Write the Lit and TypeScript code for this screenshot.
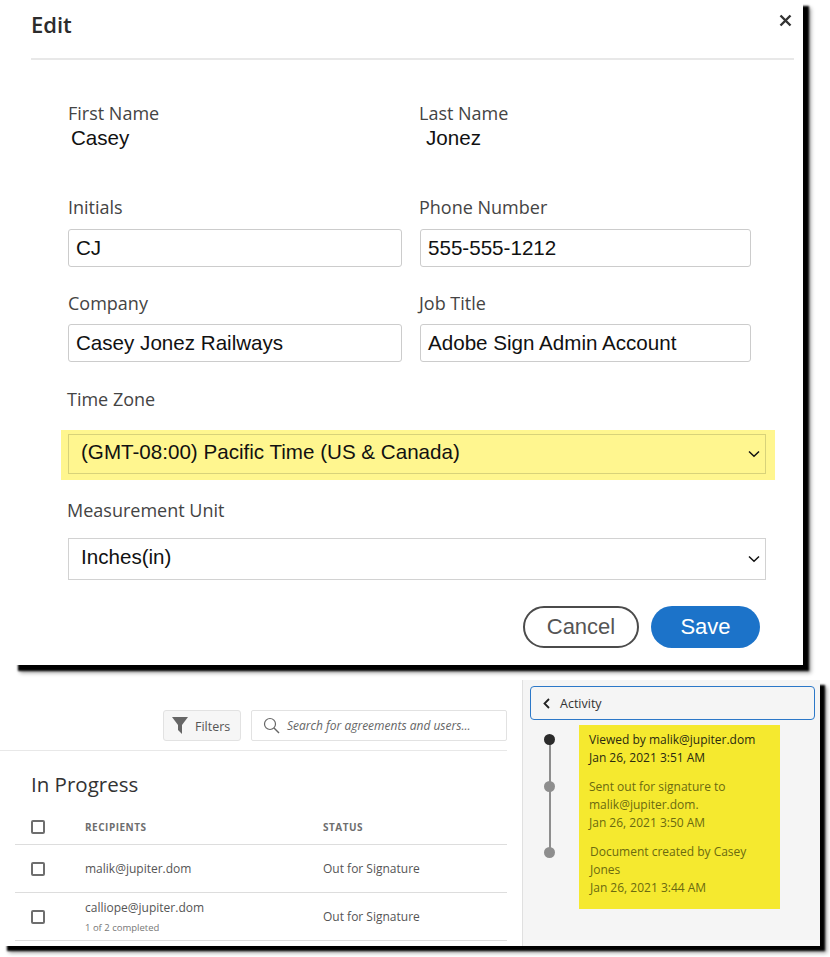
import { LitElement, html, css } from "lit";
import { customElement } from "lit/decorators.js";

const chevron = html`<svg class="chev" viewBox="0 0 12 8" width="12" height="8"><path d="M1 1.5 6 6.2 11 1.5" fill="none" stroke="#111" stroke-width="1.5"/></svg>`;
const box = html`<span class="check"></span>`;

@customElement("app-root")
export class AppRoot extends LitElement {
  static styles = css`
    :host { display: block; width: 830px; height: 957px; background: #fff; overflow: hidden; font-family: "Open Sans", "Noto Sans", sans-serif; color: #4b4b4b; }
    * { box-sizing: border-box; }
    .dialog { position: relative; margin-left: 12px; width: 791px; height: 665px; background: #fff; padding-left: 19px; padding-right: 9px; box-shadow: 6px 6px 2px #000, 8px 8px 4px rgba(0,0,0,.35); }
    .head { height: 60px; border-bottom: 2px solid #e8e8e8; padding-top: 9px; font-size: 22px; line-height: 30px; font-weight: 600; color: #2c2c2c; }
    .close { position: absolute; left: 767px; top: 14px; }
    .form { padding: 41px 0 0 37px; }
    .grid { display: grid; grid-template-columns: 334px 331px; column-gap: 18px; }
    .label { font-size: 18px; line-height: 24px; color: #444; white-space: nowrap; }
    .alt .label { margin-left: -1px; }
    .plain { font: 20.6px/26px "Liberation Sans", Arial, sans-serif; color: #111; padding-left: 3px; height: 70px; }
    .plain.j { padding-left: 6px; }
    .cell { height: 94px; }
    .cell.mid { height: 95px; }
    .cell.tall { height: 97px; }
    .cell.tall .label { padding-top: 1px; height: 25px; }
    .cell.tall .input { margin-top: 9px; }
    .input { margin-top: 10px; height: 38px; border: 1px solid #ccc; border-radius: 3px; font: 20.6px/36px "Liberation Sans", Arial, sans-serif; color: #111; padding-left: 7px; }
    .tz { margin-left: -1px; height: 24px; }
    .hl { margin: 19px 0 0 -7px; width: 714px; height: 50px; background: #fff68f; padding: 4px 0 0 7px; }
    .select { width: 698px; height: 40px; border: 1px solid #d2d2d2; display: flex; align-items: center; justify-content: space-between; padding: 0 5px 0 12px; font: 20.6px/24px "Liberation Sans", Arial, sans-serif; color: #111; }
    .select span { margin-top: -5px; }
    .hl .select { border-color: #d8d27a; }
    .mu { margin: 18px 0 16px -1px; }
    .plainsel { height: 42px; background: #fff; }
    .actions { display: flex; gap: 12px; margin: 26px 0 0 455px; font: 22px/1 "Liberation Sans", Arial, sans-serif; }
    .btn { height: 42px; border-radius: 21px; display: flex; align-items: center; justify-content: center; }
    .cancel { width: 116px; border: 2px solid #4b4b4b; color: #555; }
    .save { width: 109px; background: #1c73c9; color: #fff; }
    .lower { display: flex; margin: 15px 0 0 2px; width: 818px; height: 266px; background: #fff; box-shadow: 5px 5px 2px #000, 7px 7px 4px rgba(0,0,0,.35); }
    .left { width: 522px; flex: none; padding-top: 30px; margin-left: -2px; }
    .tools { display: flex; justify-content: flex-end; gap: 10px; width: 507px; height: 41px; border-bottom: 1px solid #e8e8e8; align-items: flex-start; }
    .filters { width: 78px; height: 31px; background: #f6f6f6; border: 1px solid #e2e2e2; border-radius: 3px; display: flex; align-items: center; padding-left: 8px; gap: 7px; font-size: 12.5px; color: #555; }
    .filters span { padding-top: 1px; }
    .search { width: 256px; height: 31px; border: 1px solid #e2e2e2; border-radius: 2px; display: flex; align-items: center; padding-left: 11px; gap: 7px; font-size: 12px; font-style: italic; color: #666; white-space: nowrap; }
    h2 { margin: 0; padding: 18px 0 0 31px; font-size: 20.5px; line-height: 30px; height: 61px; font-weight: 400; color: #333; }
    .table { margin-left: 15px; width: 492px; }
    .row { display: grid; grid-template-columns: 54px 238px 1fr; align-items: center; height: 48px; border-bottom: 1px solid #ddd; font-size: 12px; color: #555; padding-left: 16px; }
    .row.h { height: 33px; font-size: 10px; font-weight: 700; letter-spacing: .5px; color: #6e6e6e; padding-bottom: 2px; }
    .check { display: block; width: 14px; height: 14px; border: 2px solid #6e6e6e; border-radius: 2px; }
    .small { display: block; font-size: 9.5px; line-height: 14px; color: #777; margin-top: 4px; }
    .two { line-height: 18px; }
    .right { width: 298px; background: #f5f5f5; border-left: 1px solid #e0e0e0; padding-top: 6px; }
    .activity { margin-left: 7px; width: 285px; height: 34px; border: 1px solid #2c78c8; border-radius: 4px; display: flex; align-items: center; gap: 10px; padding-left: 12px; font-size: 12.5px; color: #333; }
    .feed { display: flex; margin-top: 5px; }
    .rail { position: relative; width: 56px; flex: none; }
    .rail i { position: absolute; border-radius: 50%; background: #8e8e8e; width: 11px; height: 11px; left: 21px; }
    .rail i.d1 { top: 9px; background: #2b2b2b; }
    .rail i.d2 { top: 56px; }
    .rail i.d3 { top: 122px; }
    .rail b { position: absolute; left: 26px; top: 14px; width: 2px; height: 113px; background: #8e8e8e; }
    .yellow { width: 201px; height: 184px; background: #f5e92f; padding: 6px 4px 0 10px; font-size: 12px; line-height: 18px; color: #6b6a10; }
    .yellow p { margin: 0 0 11px; }
    .yellow p.dark { color: #2a2a10; }
    .yellow p.last { padding-left: 1px; }
  `;

  render() {
    return html`
      <section class="dialog">
        <div class="head">Edit</div>
        <svg class="close" width="13" height="13" viewBox="0 0 13 13"><path d="M1.5 1.5 11.5 11.5M11.5 1.5 1.5 11.5" stroke="#333" stroke-width="2.4"/></svg>
        <div class="form">
          <div class="grid">
            <div class="cell"><div class="label">First Name</div><div class="plain">Casey</div></div>
            <div class="cell alt"><div class="label">Last Name</div><div class="plain j">Jonez</div></div>
            <div class="cell mid"><div class="label">Initials</div><div class="input">CJ</div></div>
            <div class="cell mid alt"><div class="label">Phone Number</div><div class="input">555-555-1212</div></div>
            <div class="cell tall"><div class="label">Company</div><div class="input">Casey Jonez Railways</div></div>
            <div class="cell tall alt"><div class="label">Job Title</div><div class="input">Adobe Sign Admin Account</div></div>
          </div>
          <div class="label tz">Time Zone</div>
          <div class="hl"><div class="select"><span>(GMT-08:00) Pacific Time (US &amp; Canada)</span>${chevron}</div></div>
          <div class="label mu">Measurement Unit</div>
          <div class="select plainsel"><span>Inches(in)</span>${chevron}</div>
          <div class="actions"><div class="btn cancel">Cancel</div><div class="btn save">Save</div></div>
        </div>
      </section>
      <section class="lower">
        <div class="left">
          <div class="tools">
            <div class="filters"><svg width="16" height="17" viewBox="0 0 16 17"><path d="M0 0H16L10 8V17L6 13V8Z" fill="#666"/></svg><span>Filters</span></div>
            <div class="search"><svg width="17" height="17" viewBox="0 0 17 17"><circle cx="7" cy="7" r="5.5" fill="none" stroke="#666" stroke-width="1.2"/><path d="M11 11 16 16" stroke="#666" stroke-width="1.4"/></svg>Search for agreements and users...</div>
          </div>
          <h2>In Progress</h2>
          <div class="table">
            <div class="row h">${box}<span>RECIPIENTS</span><span>STATUS</span></div>
            <div class="row">${box}<span>malik@jupiter.dom</span><span>Out for Signature</span></div>
            <div class="row">${box}<span class="two">calliope@jupiter.dom<span class="small">1 of 2 completed</span></span><span>Out for Signature</span></div>
          </div>
        </div>
        <aside class="right">
          <div class="activity"><svg width="7" height="11" viewBox="0 0 7 11"><path d="M6 1 1.5 5.5 6 10" fill="none" stroke="#222" stroke-width="1.8"/></svg>Activity</div>
          <div class="feed">
            <div class="rail"><b></b><i class="d1"></i><i class="d2"></i><i class="d3"></i></div>
            <div class="yellow">
              <p class="dark">Viewed by malik@jupiter.dom<br>Jan 26, 2021 3:51 AM</p>
              <p>Sent out for signature to<br>malik@jupiter.dom.<br>Jan 26, 2021 3:50 AM</p>
              <p class="last">Document created by Casey<br>Jones<br>Jan 26, 2021 3:44 AM</p>
            </div>
          </div>
        </aside>
      </section>
    `;
  }
}
